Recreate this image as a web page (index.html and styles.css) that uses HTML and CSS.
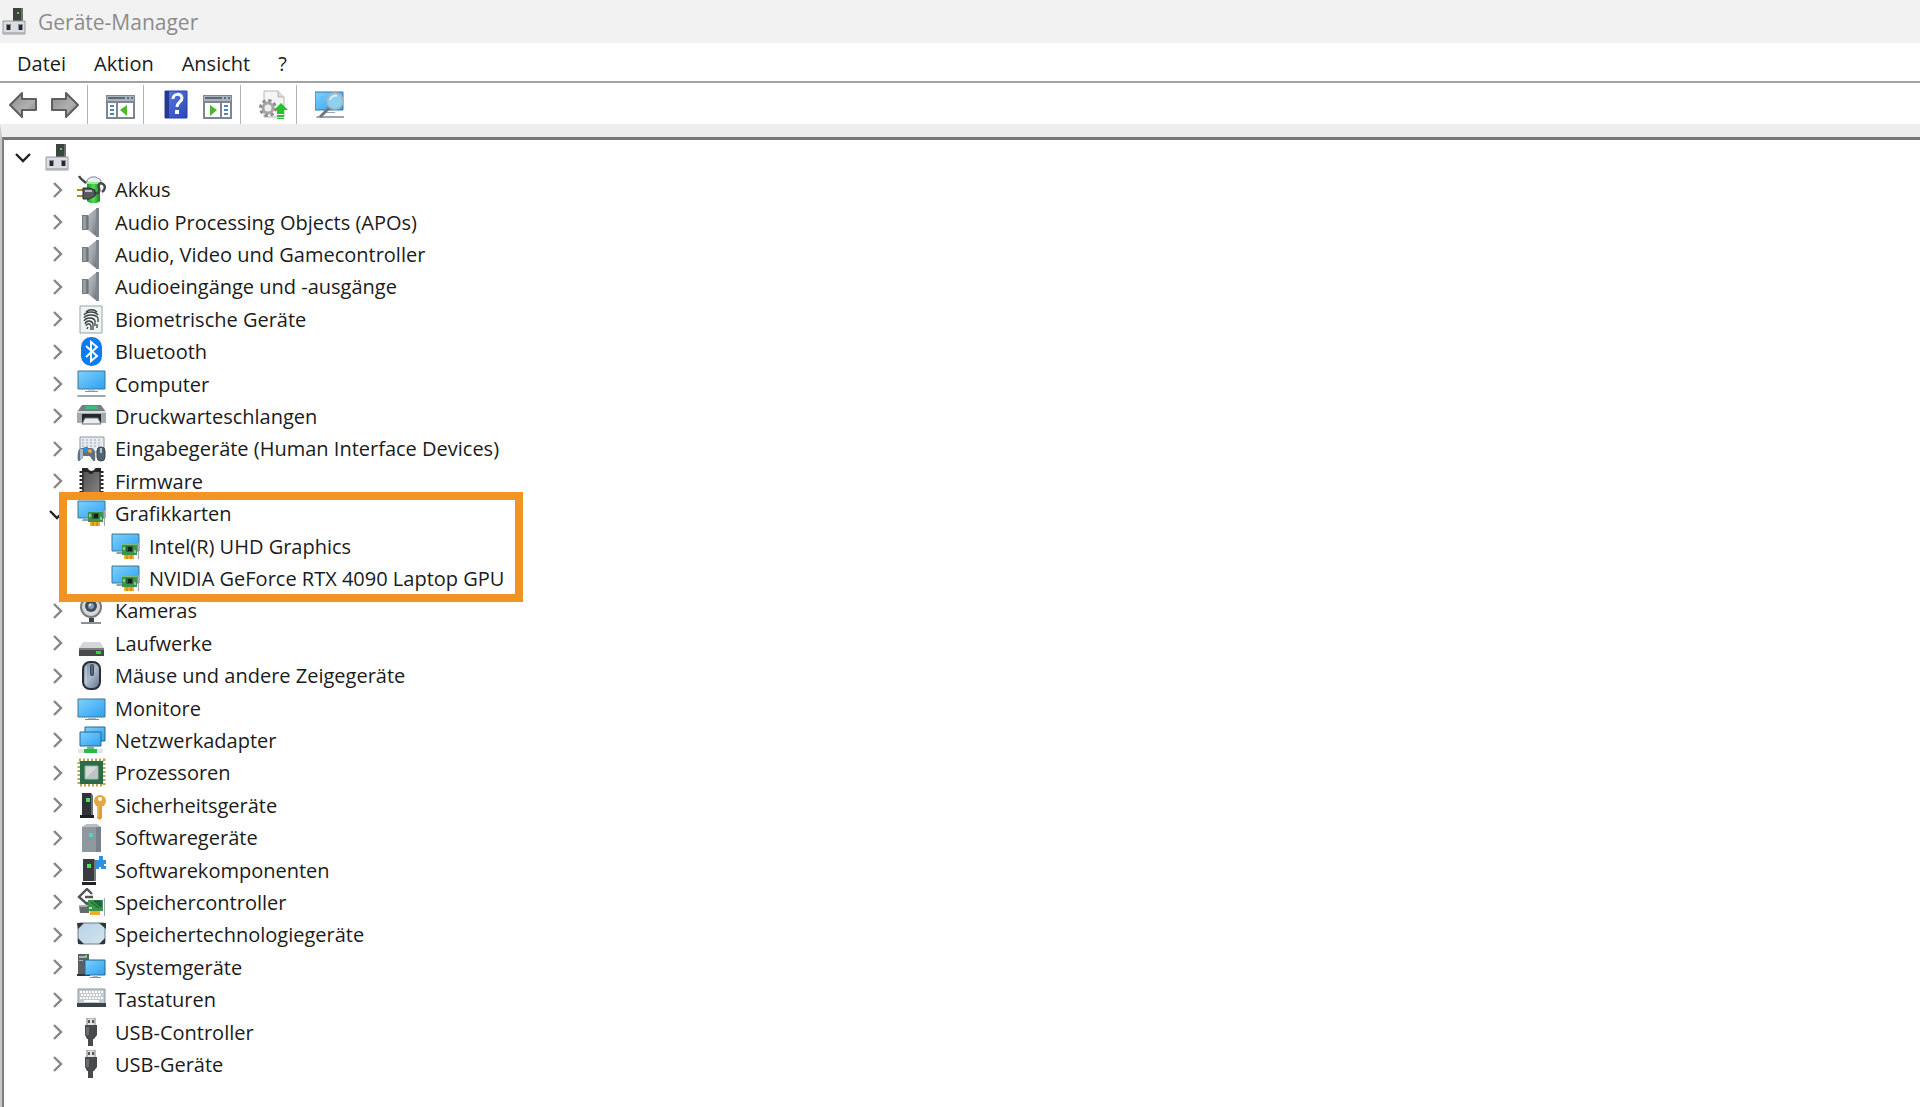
FILE: index.html
```
<!DOCTYPE html>
<html lang="de">
<head>
	<meta charset="utf-8">
	<meta name="viewport" content="width=device-width, initial-scale=1">
	<title>Geräte-Manager</title>
	<link rel="stylesheet" href="styles.css">
</head>
<body>
<!-- icon sprite -->
<svg class="sprite" aria-hidden="true">
	<defs>
		<linearGradient id="g-screen" x1="0" y1="0" x2="1" y2="1"><stop offset="0" stop-color="#7fd0fb"/><stop offset=".5" stop-color="#55b9f7"/><stop offset="1" stop-color="#2fa0ee"/></linearGradient>
		<linearGradient id="g-cone" x1="0" y1="0" x2="1" y2="1"><stop offset="0" stop-color="#b9bec2"/><stop offset=".5" stop-color="#a0a6ab"/><stop offset="1" stop-color="#676d72"/></linearGradient>
		<linearGradient id="g-arrow" x1="0" y1="0" x2="1" y2="1"><stop offset="0" stop-color="#8a8a8a"/><stop offset=".6" stop-color="#b0b0b0"/><stop offset="1" stop-color="#828282"/></linearGradient>
		<linearGradient id="g-help" x1="0" y1="0" x2="1" y2="1"><stop offset="0" stop-color="#5b7be8"/><stop offset="1" stop-color="#2a45b8"/></linearGradient>
		<linearGradient id="g-green" x1="0" y1="0" x2="1" y2="0"><stop offset="0" stop-color="#1f9a2a"/><stop offset=".5" stop-color="#55d858"/><stop offset="1" stop-color="#158a20"/></linearGradient>
		<linearGradient id="g-mouse" x1="0" y1="0" x2="1" y2="1"><stop offset="0" stop-color="#6d87a3"/><stop offset=".5" stop-color="#a9b9ca"/><stop offset="1" stop-color="#5e6f82"/></linearGradient>
		<linearGradient id="g-pale" x1="0" y1="0" x2="1" y2="1"><stop offset="0" stop-color="#b7d2e5"/><stop offset="1" stop-color="#d3e4f0"/></linearGradient>
		<linearGradient id="g-chip" x1="0" y1="0" x2="1" y2="1"><stop offset="0" stop-color="#4c4c4c"/><stop offset="1" stop-color="#8a8a8a"/></linearGradient>
	</defs>

	<symbol id="chevron" viewBox="0 0 24 24"><path d="M9 5l7 7-7 7" fill="none" stroke="#868686" stroke-width="2.4"/></symbol>
	<symbol id="chevron-down" viewBox="0 0 24 24"><path d="M5 9l7 7 7-7" fill="none" stroke="#222" stroke-width="2.4"/></symbol>

	<symbol id="root" viewBox="0 0 29 29">
		<path d="M13 1h10v14H13z" fill="#3b443f"/><path d="M21 1h2v14h-2z" fill="#687069"/><path d="M17 5h2v2h-2z" fill="#4fd25a"/>
		<path d="M3 14h22v13H3z" fill="#dcdde0" stroke="#9698a0"/><path d="M3 25h22v2H3z" fill="#b4b5ba"/>
		<path d="M6 17h5v6H6zM18 17h5v6h-5z" fill="#8a8d93"/><path d="M7 18h3v5H7zM19 18h3v5h-3z" fill="#26282c"/>
	</symbol>
	<symbol id="battery" viewBox="0 0 29 29">
		<path d="M10 6c0-3 3-2 4-4h5c1 2 5 1 5 4v3H10z" fill="#e9edf5" stroke="#7d8598"/>
		<path d="M10 7h13v19c-2 3-11 3-13 0z" fill="url(#g-green)"/><path d="M10 7h13v2H10z" fill="#8ff08e"/>
		<path d="M2 1c2 4 5 5 7 7M17 18c5 1 6-1 5-5s1-6 4-4 2 6-1 8" fill="none" stroke="#454a4c" stroke-width="2.5"/>
		<path d="M0 14h7v2H0zM0 20h7v2H0z" fill="#b18a2b"/>
		<path d="M6 13h6l6 2v6l-6 3H6z" fill="#555a5e" stroke="#272a2c"/><path d="M8 15h7v2H8z" fill="#b9bec2"/>
	</symbol>
	<symbol id="speaker" viewBox="0 0 29 29">
		<path d="M5 7h7v15H5z" fill="#777e83"/><path d="M6 8h3v13H6z" fill="#979ea3"/>
		<path d="M11 7l9-7v29l-9-7z" fill="url(#g-cone)"/><path d="M19 0h3v29h-3z" fill="#7f868b"/><path d="M11 8v13" stroke="#656c71"/>
	</symbol>
	<symbol id="finger" viewBox="0 0 29 29">
		<path d="M3 1h22v27H3z" fill="#edf4f2" stroke="#93a7a3"/>
		<g fill="none" stroke="#3c4342" stroke-width="1.3">
			<path d="M9 7c3-3 8-3 11 0M7 10c3-4 11-4 14 0M7 13c2-4 12-4 14 0v4M7 16c2-4 10-4 11 0v5M8 19c1-4 7-4 8 0v6M9 21c1-3 4-3 5 0v4M10 24l1-2M20 19v4"/>
		</g>
	</symbol>
	<symbol id="bluetooth" viewBox="0 0 29 29">
		<rect x="4" y="0" width="21" height="29" rx="10" fill="#0b7cf2"/>
		<path d="M9 9l11 10-6 5V5l6 5L9 20" fill="none" stroke="#fff" stroke-width="2"/>
	</symbol>
	<symbol id="computer" viewBox="0 0 29 29">
		<path d="M1 1h27v18H1z" fill="url(#g-screen)" stroke="#3c769c"/>
		<path d="M11 20h7v2h-7z" fill="#c9d0d6"/><path d="M8 21h13v1H8z" fill="#8a97a2"/><path d="M1 25h27l1 2H0z" fill="#9ba6b0"/>
	</symbol>
	<symbol id="printer" viewBox="0 0 29 29">
		<path d="M5 3h19l5 7H0z" fill="#777e80"/><path d="M9 4h11l1 3H8z" fill="#3bbf7c"/>
		<path d="M0 9h29v12H0z" fill="#a2aab0"/><path d="M0 9h29v2H0z" fill="#d5dade"/>
		<path d="M5 12h19v8H5z" fill="#24282b"/><path d="M8 16h13l3 6H5z" fill="#e8edf0" stroke="#6a7176"/>
	</symbol>
	<symbol id="hid" viewBox="0 0 29 29">
		<path d="M3 3h24v15H3z" fill="#e7ebef" stroke="#8c969e"/>
		<path d="M5 6h20M5 9h20M5 12h20" stroke="#9ba6b0" stroke-dasharray="2 2"/>
		<path d="M1 27c-1-7 0-13 4-13h9c4 0 5 6 4 13-3 1-4-5-6-5H7c-2 0-3 6-6 5z" fill="#5f7181"/>
		<path d="M3 15h3v10H3z" fill="#a9b8c5"/><circle cx="13" cy="17" r="2" fill="#f0a830"/><path d="M7 13h4v5H7z" fill="#2c8fe0"/>
		<rect x="20" y="13" width="8" height="14" rx="4" fill="#536472" stroke="#38434c"/><path d="M23 14h2v5h-2z" fill="#b8c4ce"/>
	</symbol>
	<symbol id="firmware" viewBox="0 0 29 29">
		<path d="M5 1h6c1 4 6 4 7 0h6v28H5z" fill="url(#g-chip)"/><path d="M5 1h5c1 4 8 4 9 0h5v4h-7l-2 2h-2l-2-2H5z" fill="#262626"/>
		<path d="M4 4v25M25 4v25" stroke="#262626" stroke-width="3" stroke-dasharray="2 2"/><path d="M6 3v26M23 3v26" stroke="#222" stroke-width="1"/>
	</symbol>
	<symbol id="gpu" viewBox="0 0 29 29">
		<path d="M1 2h27v17H1z" fill="url(#g-screen)" stroke="#3c769c"/>
		<path d="M6 20h5v2H5z" fill="#8fa0ac"/><path d="M11 12h15v11H11z" fill="#3d9250"/><path d="M11 12h15v1H11z" fill="#75bd7d"/>
		<path d="M15 14h7v6h-7z" fill="#2c6138"/><path d="M17 15h4v4h-4z" fill="#121f16"/><path d="M12 15h2v3h-2zM23 18h2v3h-2z" fill="#88c98e"/>
		<path d="M13 23h10v4H13z" fill="#efab2b"/><path d="M16 23v4M20 23v4" stroke="#bd7a0a"/><path d="M27 11h1v16h-1z" fill="#9fa8ae"/>
	</symbol>
	<symbol id="camera" viewBox="0 0 29 29">
		<circle cx="14" cy="11" r="10" fill="#d5d8da" stroke="#777b7e" stroke-width="2"/><circle cx="14" cy="10" r="6" fill="#444c54"/><circle cx="14" cy="10" r="3" fill="#7ba0bf"/><circle cx="13" cy="9" r="1" fill="#fff"/>
		<path d="M12 22h5v4h-5z" fill="#404345"/><path d="M4 26h20v2H4z" fill="#8d9193"/>
	</symbol>
	<symbol id="drive" viewBox="0 0 29 29">
		<path d="M6 13h17l4 6H2z" fill="#d5d6d8"/><path d="M2 19h25v8H2z" fill="#47494b"/><path d="M2 19h25v2H2z" fill="#7b7e80"/><path d="M19 22h5v3h-5z" fill="#35d53c"/>
	</symbol>
	<symbol id="mouse" viewBox="0 0 29 29">
		<rect x="6" y="1" width="17" height="27" rx="7" fill="url(#g-mouse)" stroke="#272e36" stroke-width="2"/>
		<path d="M9 5v18" stroke="#d4dde6"/><rect x="13" y="3" width="4" height="12" rx="2" fill="#3d4955"/><path d="M15 4v9" stroke="#74869a"/>
	</symbol>
	<symbol id="monitor" viewBox="0 0 29 29">
		<path d="M1 5h27v18H1z" fill="url(#g-screen)" stroke="#3c769c"/><path d="M11 24h8v1h-8z" fill="#b4bec6"/><path d="M8 25h14v1H8z" fill="#7590a3"/>
	</symbol>
	<symbol id="network" viewBox="0 0 29 29">
		<path d="M8 1h20v14H8z" fill="url(#g-screen)" stroke="#27668f"/><path d="M3 6h21v14H3z" fill="url(#g-screen)" stroke="#27668f"/>
		<path d="M11 20h5v3h-5z" fill="#8aa3b0"/><path d="M1 23h25v4H1z" fill="#dfe5e8"/><path d="M7 23h13v4H7z" fill="#2cb94a"/><path d="M10 21h7v2h-7z" fill="#55ce69"/>
	</symbol>
	<symbol id="cpu" viewBox="0 0 29 29">
		<path d="M2 2h25v25H2z" fill="none" stroke="#b8a657" stroke-width="3" stroke-dasharray="2 2"/><path d="M3 3h23v23H3z" fill="#2c6b47"/>
		<path d="M8 8h13v13H8z" fill="#d5dbd8" stroke="#91b09e"/><path d="M9 20L20 9v11z" fill="#bcc5c1"/>
	</symbol>
	<symbol id="security" viewBox="0 0 29 29">
		<path d="M5 2h9l2 3v19H5z" fill="#30343a"/><path d="M14 2l2 3v19h-2z" fill="#6c7177"/><path d="M3 24h14v3H3z" fill="#1e2023"/><path d="M9 7h4v4H9z" fill="#4ae554"/>
		<path d="M20 14h5v13l-2 2-3-2z" fill="#dd9f35"/><circle cx="23" cy="10" r="6" fill="#e2a73e"/><circle cx="23" cy="8" r="2" fill="#fff"/><path d="M21 15v11" stroke="#f5d384"/>
	</symbol>
	<symbol id="software" viewBox="0 0 29 29">
		<path d="M5 4l5-3h9l5 3v25H5z" fill="#8f989e"/><path d="M5 4l5-3h9l5 3z" fill="#b7bfc4"/><path d="M19 4h5v25h-5z" fill="#78818a"/><path d="M12 10h4v4h-4z" fill="#4fd5c4"/>
	</symbol>
	<symbol id="component" viewBox="0 0 29 29">
		<path d="M18 4h4V0h4v4h3v4h-2v2h2v3h-5v-2h-2v2h-4z" fill="#2e91dc"/>
		<path d="M6 3h11l2 2v20H6z" fill="#383c41"/><path d="M17 3l2 2v20h-2z" fill="#73787d"/><path d="M5 26h14v3H5z" fill="#222427"/><path d="M10 8h4v4h-4z" fill="#4ae554"/>
	</symbol>
	<symbol id="storage-ctl" viewBox="0 0 29 29">
		<path d="M15 6l-5-5-8 8 8 7 3-3M8 9h8" fill="none" stroke="#505457" stroke-width="2.4"/>
		<path d="M2 18h10v7H3z" fill="#666a6d"/><path d="M2 17h8v2H2z" fill="#aaaeb1"/>
		<path d="M11 12h15v11H11z" fill="#3d9250"/><path d="M14 14l8 6M17 13h7v6z" stroke="#1e5430" fill="#286b3a"/><path d="M12 19h3v2h-3z" fill="#b6dfb8"/>
		<path d="M13 23h10v4H13z" fill="#efab2b"/><path d="M27 10h1v18h-1z" fill="#9fa8ae"/>
	</symbol>
	<symbol id="storage-tech" viewBox="0 0 29 29">
		<rect x="1" y="3" width="27" height="21" rx="2" fill="url(#g-pale)" stroke="#6d7e8a"/>
		<path d="M0 3h7L1 9zM22 3h7v6zM28 18v6h-6zM7 24H1v-6z" fill="#323639"/>
	</symbol>
	<symbol id="system" viewBox="0 0 29 29">
		<path d="M1 1h11v20H1z" fill="#596066"/><path d="M2 3h8v2H2zM2 7h4v1H2z" fill="#a9b1b6"/><path d="M8 2h2v2H8z" fill="#4ae554"/><path d="M0 21h13v2H0z" fill="#333"/>
		<path d="M8 7h20v15H8z" fill="url(#g-screen)" stroke="#27668f"/><path d="M16 22h5v2h-5z" fill="#b4bec6"/><path d="M13 24h11v1H13z" fill="#7590a3"/>
	</symbol>
	<symbol id="keyboard" viewBox="0 0 29 29">
		<path d="M1 4h27v15H1z" fill="#c3c9cf" stroke="#8e979f"/><path d="M3 7h23M4 10h21M3 13h23" stroke="#fff" stroke-width="2" stroke-dasharray="2 1"/><path d="M7 16h15" stroke="#fff" stroke-width="2"/><path d="M0 18h29v4H0z" fill="#3c444b"/>
	</symbol>
	<symbol id="usb" viewBox="0 0 29 29">
		<path d="M10 0h8v8h-8z" fill="#e5e5e5" stroke="#808080"/><path d="M11 2h2v3h-2zM15 2h2v3h-2z" fill="#555"/>
		<path d="M8 7h12v10l-3 4h-1v7h-5v-7h-1l-2-4z" fill="#48494a"/><path d="M9 9h3v8H9z" fill="#6c6d6e"/>
	</symbol>

	<!-- toolbar -->
	<symbol id="back" viewBox="0 0 29 29"><path d="M1 15L13 3v6h14v11H13v7z" fill="url(#g-arrow)" stroke="#5f5f5f" stroke-width="2" stroke-linejoin="round"/></symbol>
	<symbol id="forward" viewBox="0 0 29 29"><path d="M28 15L16 3v6H2v11h14v7z" fill="url(#g-arrow)" stroke="#5f5f5f" stroke-width="2" stroke-linejoin="round"/></symbol>
	<symbol id="tree-pane" viewBox="0 0 29 29">
		<path d="M1 6h27v22H1z" fill="#fff" stroke="#7d8793" stroke-width="2"/><path d="M1 6h27v5H1z" fill="#aab4c0"/><path d="M2 8h17M21 8h2M25 8h2" stroke="#5f6974" stroke-width="2"/>
		<path d="M1 12h27M11 13v14" stroke="#7d8793" stroke-width="2"/><path d="M4 16h4M4 20h4M4 24h4" stroke="#4e86b8" stroke-width="2"/><path d="M21 15v11l-7-6z" fill="#4cb82c"/>
	</symbol>
	<symbol id="help" viewBox="0 0 29 29">
		<path d="M3 1h22v27H3z" fill="url(#g-help)" stroke="#2c409b"/><path d="M3 1h4v27H3z" fill="#243894"/>
		<path d="M11 9c0-6 9-6 9-1 0 4-5 4-5 9" fill="none" stroke="#fff" stroke-width="3"/><path d="M13 20h4v4h-4z" fill="#fff"/>
	</symbol>
	<symbol id="action-pane" viewBox="0 0 29 29">
		<path d="M1 6h27v22H1z" fill="#fff" stroke="#7d8793" stroke-width="2"/><path d="M1 6h27v5H1z" fill="#aab4c0"/><path d="M2 8h17M21 8h2M25 8h2" stroke="#5f6974" stroke-width="2"/>
		<path d="M1 12h27M18 13v14" stroke="#7d8793" stroke-width="2"/><path d="M21 16h4M21 20h4M21 24h4" stroke="#4e86b8" stroke-width="2"/><path d="M7 15v11l7-6z" fill="#4cb82c"/>
	</symbol>
	<symbol id="update" viewBox="0 0 29 29">
		<path d="M5 1h14l6 6v20H5z" fill="#f5f5f5" stroke="#b6b6b6"/><path d="M19 1v6h6" fill="#ddd" stroke="#b6b6b6"/>
		<circle cx="9" cy="18" r="7" fill="none" stroke="#8d8d8d" stroke-width="4" stroke-dasharray="3 2.5"/><circle cx="9" cy="18" r="5" fill="#f0f0f0" stroke="#a5a5a5" stroke-width="3"/>
		<path d="M22 13l7 7h-4v4h-7v-4h-3z" fill="#26c02e"/><path d="M18 25h7v2h-7zM18 28h7v1h-7z" fill="#26c02e"/>
	</symbol>
	<symbol id="scan" viewBox="0 0 29 29">
		<path d="M0 2h28v18H0z" fill="url(#g-screen)" stroke="#3c769c"/><path d="M10 22h10v1H10zM2 26h27v2H1z" fill="#9ba6b0"/>
		<path d="M14 18l-9 9" stroke="#70767b" stroke-width="3"/><circle cx="20" cy="11" r="8" fill="#8fd0ef" stroke="#a4b7c2" stroke-width="2"/><path d="M15 10c1-4 5-5 7-4" stroke="#d3effb" stroke-width="2" fill="none"/>
	</symbol>
</svg>

<div class="window">
	<header class="titlebar">
		<svg class="icon"><use href="#root"/></svg>
		<h1>Geräte-Manager</h1>
	</header>
	<nav class="menubar">
		<button type="button">Datei</button>
		<button type="button">Aktion</button>
		<button type="button">Ansicht</button>
		<button type="button">?</button>
	</nav>
	<div class="toolbar" role="toolbar">
		<button type="button" aria-label="Zurück"><svg class="icon"><use href="#back"/></svg></button>
		<button type="button" aria-label="Vorwärts"><svg class="icon"><use href="#forward"/></svg></button>
		<span class="sep"></span>
		<button type="button" aria-label="Konsolenstruktur"><svg class="icon"><use href="#tree-pane"/></svg></button>
		<span class="sep"></span>
		<button type="button" aria-label="Hilfe"><svg class="icon"><use href="#help"/></svg></button>
		<button type="button" aria-label="Aktionsbereich"><svg class="icon"><use href="#action-pane"/></svg></button>
		<span class="sep"></span>
		<button type="button" aria-label="Treiber aktualisieren"><svg class="icon"><use href="#update"/></svg></button>
		<span class="sep"></span>
		<button type="button" aria-label="Nach geänderter Hardware suchen"><svg class="icon"><use href="#scan"/></svg></button>
	</div>

	<main class="pane">
		<ul class="tree">
			<li class="root"><button type="button" class="toggle" aria-label="Reduzieren"><svg><use href="#chevron-down"/></svg></button><svg class="icon"><use href="#root"/></svg></li>
			<li><button type="button" class="toggle" aria-label="Erweitern"><svg><use href="#chevron"/></svg></button><svg class="icon"><use href="#battery"/></svg><span>Akkus</span></li>
			<li><button type="button" class="toggle" aria-label="Erweitern"><svg><use href="#chevron"/></svg></button><svg class="icon"><use href="#speaker"/></svg><span>Audio Processing Objects (APOs)</span></li>
			<li><button type="button" class="toggle" aria-label="Erweitern"><svg><use href="#chevron"/></svg></button><svg class="icon"><use href="#speaker"/></svg><span>Audio, Video und Gamecontroller</span></li>
			<li><button type="button" class="toggle" aria-label="Erweitern"><svg><use href="#chevron"/></svg></button><svg class="icon"><use href="#speaker"/></svg><span>Audioeingänge und -ausgänge</span></li>
			<li><button type="button" class="toggle" aria-label="Erweitern"><svg><use href="#chevron"/></svg></button><svg class="icon"><use href="#finger"/></svg><span>Biometrische Geräte</span></li>
			<li><button type="button" class="toggle" aria-label="Erweitern"><svg><use href="#chevron"/></svg></button><svg class="icon"><use href="#bluetooth"/></svg><span>Bluetooth</span></li>
			<li><button type="button" class="toggle" aria-label="Erweitern"><svg><use href="#chevron"/></svg></button><svg class="icon"><use href="#computer"/></svg><span>Computer</span></li>
			<li><button type="button" class="toggle" aria-label="Erweitern"><svg><use href="#chevron"/></svg></button><svg class="icon"><use href="#printer"/></svg><span>Druckwarteschlangen</span></li>
			<li><button type="button" class="toggle" aria-label="Erweitern"><svg><use href="#chevron"/></svg></button><svg class="icon"><use href="#hid"/></svg><span>Eingabegeräte (Human Interface Devices)</span></li>
			<li><button type="button" class="toggle" aria-label="Erweitern"><svg><use href="#chevron"/></svg></button><svg class="icon"><use href="#firmware"/></svg><span>Firmware</span></li>
			<li class="marked"><button type="button" class="toggle" aria-label="Reduzieren"><svg><use href="#chevron-down"/></svg></button><svg class="icon"><use href="#gpu"/></svg><span>Grafikkarten</span></li>
			<li class="child"><svg class="icon"><use href="#gpu"/></svg><span>Intel(R) UHD Graphics</span></li>
			<li class="child"><svg class="icon"><use href="#gpu"/></svg><span>NVIDIA GeForce RTX 4090 Laptop GPU</span></li>
			<li><button type="button" class="toggle" aria-label="Erweitern"><svg><use href="#chevron"/></svg></button><svg class="icon"><use href="#camera"/></svg><span>Kameras</span></li>
			<li><button type="button" class="toggle" aria-label="Erweitern"><svg><use href="#chevron"/></svg></button><svg class="icon"><use href="#drive"/></svg><span>Laufwerke</span></li>
			<li><button type="button" class="toggle" aria-label="Erweitern"><svg><use href="#chevron"/></svg></button><svg class="icon"><use href="#mouse"/></svg><span>Mäuse und andere Zeigegeräte</span></li>
			<li><button type="button" class="toggle" aria-label="Erweitern"><svg><use href="#chevron"/></svg></button><svg class="icon"><use href="#monitor"/></svg><span>Monitore</span></li>
			<li><button type="button" class="toggle" aria-label="Erweitern"><svg><use href="#chevron"/></svg></button><svg class="icon"><use href="#network"/></svg><span>Netzwerkadapter</span></li>
			<li><button type="button" class="toggle" aria-label="Erweitern"><svg><use href="#chevron"/></svg></button><svg class="icon"><use href="#cpu"/></svg><span>Prozessoren</span></li>
			<li><button type="button" class="toggle" aria-label="Erweitern"><svg><use href="#chevron"/></svg></button><svg class="icon"><use href="#security"/></svg><span>Sicherheitsgeräte</span></li>
			<li><button type="button" class="toggle" aria-label="Erweitern"><svg><use href="#chevron"/></svg></button><svg class="icon"><use href="#software"/></svg><span>Softwaregeräte</span></li>
			<li><button type="button" class="toggle" aria-label="Erweitern"><svg><use href="#chevron"/></svg></button><svg class="icon"><use href="#component"/></svg><span>Softwarekomponenten</span></li>
			<li><button type="button" class="toggle" aria-label="Erweitern"><svg><use href="#chevron"/></svg></button><svg class="icon"><use href="#storage-ctl"/></svg><span>Speichercontroller</span></li>
			<li><button type="button" class="toggle" aria-label="Erweitern"><svg><use href="#chevron"/></svg></button><svg class="icon"><use href="#storage-tech"/></svg><span>Speichertechnologiegeräte</span></li>
			<li><button type="button" class="toggle" aria-label="Erweitern"><svg><use href="#chevron"/></svg></button><svg class="icon"><use href="#system"/></svg><span>Systemgeräte</span></li>
			<li><button type="button" class="toggle" aria-label="Erweitern"><svg><use href="#chevron"/></svg></button><svg class="icon"><use href="#keyboard"/></svg><span>Tastaturen</span></li>
			<li><button type="button" class="toggle" aria-label="Erweitern"><svg><use href="#chevron"/></svg></button><svg class="icon"><use href="#usb"/></svg><span>USB-Controller</span></li>
			<li><button type="button" class="toggle" aria-label="Erweitern"><svg><use href="#chevron"/></svg></button><svg class="icon"><use href="#usb"/></svg><span>USB-Geräte</span></li>
		</ul>
	</main>
</div>
</body>
</html>
```
FILE: styles.css
```
*, *::after { box-sizing: border-box; }
body, h1, ul, li { margin: 0; padding: 0; }
body { background: #fff; color: #1b1b1b; font-family: "Open Sans", "Noto Sans", sans-serif; font-size: 20px; }
button { border: 0; padding: 0; background: none; color: inherit; font: inherit; }
.sprite { position: absolute; width: 0; height: 0; }
.icon { display: block; flex: none; width: 29px; height: 29px; }

.window { display: flex; flex-direction: column; min-height: 100vh; }

/* title, menu, toolbar */
.titlebar { display: flex; align-items: center; gap: 9px; height: 43px; background: #f2f2f2; }
.titlebar h1 { color: #8c8c8c; font-size: 21px; font-weight: normal; }
.menubar { display: flex; align-items: center; gap: 28px; height: 40px; padding: 2px 0 0 17px; border-bottom: 2px solid #a3a3a3; }
.toolbar { display: flex; align-items: center; gap: 12px; height: 41px; padding: 2px 0 0 9px; }
.toolbar .sep { align-self: stretch; width: 1px; margin: 0 6px 0 -4px; background: #b4b4b4; }

/* device tree */
.pane { display: grid; flex: 1; border-top: 13px solid #eee; border-left: 2px solid #c8c8c8; }
.tree {
	display: grid;
	grid-auto-rows: 32px 33px 32px 32px 33px;
	align-content: start;
	padding-top: 1px;
	border-top: 3px solid #777;
	border-left: 2px solid #808080;
	list-style: none;
}
.tree li { display: flex; align-items: center; gap: 8px; padding-left: 41px; white-space: nowrap; }
.tree .root { padding-left: 7px; }
.tree .child { padding-left: 107px; }
.tree span { padding-left: 1px; }
.toggle, .toggle svg { display: block; width: 24px; height: 24px; }

/* frame round the graphics cards */
.tree .marked { position: relative; }
.marked::after {
	content: "";
	position: absolute;
	top: -5px;
	left: 55px;
	width: 464px;
	height: 110px;
	border: 8px solid #f29423;
	pointer-events: none;
}
```
